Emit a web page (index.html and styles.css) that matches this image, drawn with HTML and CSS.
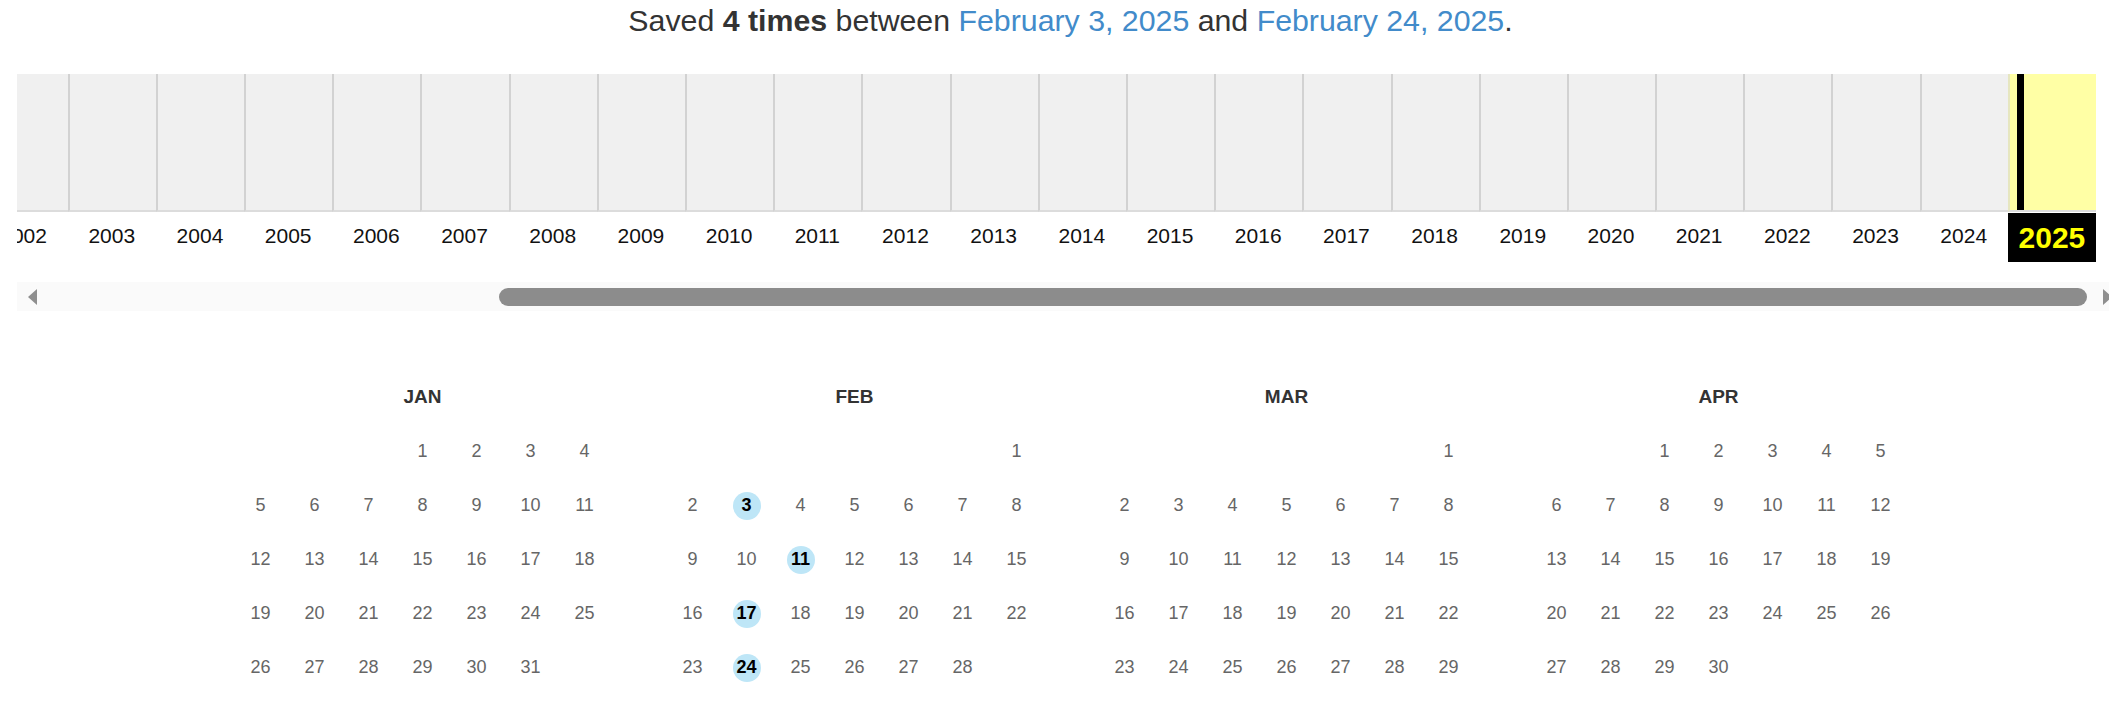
FILE: index.html
```html
<!DOCTYPE html>
<html lang="en">
<head>
  <meta charset="UTF-8">
  <title>Wayback Machine - Calendar</title>
  <link rel="stylesheet" href="styles.css">
</head>
<body>
  <div class="summary">
    Saved <strong>4 times</strong> between <a href="#">February 3, 2025</a> and <a href="#">February 24, 2025</a>.
  </div>

  <div class="sparkline">
    <div class="years">
      <div class="year"><div class="bars"></div><div class="label">2002</div></div>
      <div class="year"><div class="bars"></div><div class="label">2003</div></div>
      <div class="year"><div class="bars"></div><div class="label">2004</div></div>
      <div class="year"><div class="bars"></div><div class="label">2005</div></div>
      <div class="year"><div class="bars"></div><div class="label">2006</div></div>
      <div class="year"><div class="bars"></div><div class="label">2007</div></div>
      <div class="year"><div class="bars"></div><div class="label">2008</div></div>
      <div class="year"><div class="bars"></div><div class="label">2009</div></div>
      <div class="year"><div class="bars"></div><div class="label">2010</div></div>
      <div class="year"><div class="bars"></div><div class="label">2011</div></div>
      <div class="year"><div class="bars"></div><div class="label">2012</div></div>
      <div class="year"><div class="bars"></div><div class="label">2013</div></div>
      <div class="year"><div class="bars"></div><div class="label">2014</div></div>
      <div class="year"><div class="bars"></div><div class="label">2015</div></div>
      <div class="year"><div class="bars"></div><div class="label">2016</div></div>
      <div class="year"><div class="bars"></div><div class="label">2017</div></div>
      <div class="year"><div class="bars"></div><div class="label">2018</div></div>
      <div class="year"><div class="bars"></div><div class="label">2019</div></div>
      <div class="year"><div class="bars"></div><div class="label">2020</div></div>
      <div class="year"><div class="bars"></div><div class="label">2021</div></div>
      <div class="year"><div class="bars"></div><div class="label">2022</div></div>
      <div class="year"><div class="bars"></div><div class="label">2023</div></div>
      <div class="year"><div class="bars"></div><div class="label">2024</div></div>
      <div class="year current">
        <div class="bars"><span class="month-bar"></span></div>
        <div class="label">2025</div>
      </div>
    </div>
  </div>

  <div class="scroller">
    <span class="arrow left"></span>
    <span class="thumb"></span>
    <span class="arrow right"></span>
  </div>

  <div class="calendar">
    <div class="month">
      <div class="month-name">JAN</div>
      <span class="day start-4">1</span><span class="day">2</span><span class="day">3</span><span class="day">4</span>
      <span class="day">5</span><span class="day">6</span><span class="day">7</span><span class="day">8</span><span class="day">9</span><span class="day">10</span><span class="day">11</span>
      <span class="day">12</span><span class="day">13</span><span class="day">14</span><span class="day">15</span><span class="day">16</span><span class="day">17</span><span class="day">18</span>
      <span class="day">19</span><span class="day">20</span><span class="day">21</span><span class="day">22</span><span class="day">23</span><span class="day">24</span><span class="day">25</span>
      <span class="day">26</span><span class="day">27</span><span class="day">28</span><span class="day">29</span><span class="day">30</span><span class="day">31</span>
    </div>

    <div class="month">
      <div class="month-name">FEB</div>
      <span class="day start-7">1</span>
      <span class="day">2</span><span class="day"><a class="dot" href="#">3</a></span><span class="day">4</span><span class="day">5</span><span class="day">6</span><span class="day">7</span><span class="day">8</span>
      <span class="day">9</span><span class="day">10</span><span class="day"><a class="dot" href="#">11</a></span><span class="day">12</span><span class="day">13</span><span class="day">14</span><span class="day">15</span>
      <span class="day">16</span><span class="day"><a class="dot" href="#">17</a></span><span class="day">18</span><span class="day">19</span><span class="day">20</span><span class="day">21</span><span class="day">22</span>
      <span class="day">23</span><span class="day"><a class="dot" href="#">24</a></span><span class="day">25</span><span class="day">26</span><span class="day">27</span><span class="day">28</span>
    </div>

    <div class="month">
      <div class="month-name">MAR</div>
      <span class="day start-7">1</span>
      <span class="day">2</span><span class="day">3</span><span class="day">4</span><span class="day">5</span><span class="day">6</span><span class="day">7</span><span class="day">8</span>
      <span class="day">9</span><span class="day">10</span><span class="day">11</span><span class="day">12</span><span class="day">13</span><span class="day">14</span><span class="day">15</span>
      <span class="day">16</span><span class="day">17</span><span class="day">18</span><span class="day">19</span><span class="day">20</span><span class="day">21</span><span class="day">22</span>
      <span class="day">23</span><span class="day">24</span><span class="day">25</span><span class="day">26</span><span class="day">27</span><span class="day">28</span><span class="day">29</span>
    </div>

    <div class="month">
      <div class="month-name">APR</div>
      <span class="day start-3">1</span><span class="day">2</span><span class="day">3</span><span class="day">4</span><span class="day">5</span>
      <span class="day">6</span><span class="day">7</span><span class="day">8</span><span class="day">9</span><span class="day">10</span><span class="day">11</span><span class="day">12</span>
      <span class="day">13</span><span class="day">14</span><span class="day">15</span><span class="day">16</span><span class="day">17</span><span class="day">18</span><span class="day">19</span>
      <span class="day">20</span><span class="day">21</span><span class="day">22</span><span class="day">23</span><span class="day">24</span><span class="day">25</span><span class="day">26</span>
      <span class="day">27</span><span class="day">28</span><span class="day">29</span><span class="day">30</span>
    </div>
  </div>
</body>
</html>
```

FILE: styles.css
```css
html, body {
  overflow: hidden;
}

body {
  margin: 0;
  padding: 0;
  background: #fff;
  font-family: 'Liberation Sans', Arial, sans-serif;
  color: #333;
}

a {
  text-decoration: none;
}

.summary {
  padding-left: 32px;
  text-align: center;
  font-size: 30.3px;
  line-height: 41px;
  color: #333;
}

.summary a {
  color: #428bca;
}

/* year sparkline */
.sparkline {
  margin: 33px 0 0 17px;
  width: 2079px;
  overflow: hidden;
}

.years {
  display: flex;
  margin-left: -37.5px;
}

.year {
  flex: 0 0 88.2px;
  display: flex;
  flex-direction: column;
}

.bars {
  height: 138px;
  box-sizing: border-box;
  background: #f0f0f0;
  border-left: 2px solid #d2d2d2;
  border-bottom: 2px solid #dcdcdc;
}

.label {
  height: 51px;
  padding-bottom: 4px;
  box-sizing: border-box;
  display: flex;
  align-items: center;
  justify-content: center;
  font-size: 21px;
  color: #111;
}

.current .bars {
  background: #ffffa5;
  border-left-color: #e6e6c0;
  padding-left: 7px;
}

.month-bar {
  display: block;
  width: 7px;
  height: 100%;
  background: #000;
}

.current .label {
  background: #000;
  color: #ffff00;
  font-weight: bold;
  font-size: 30px;
  margin-top: 1px;
  height: 49px;
  padding-bottom: 0;
}

/* fake horizontal scrollbar */
.scroller {
  margin: 19px 0 0 17px;
  width: 2100px;
  height: 29px;
  background: #fafafa;
  display: flex;
  align-items: center;
}

.arrow {
  width: 0;
  height: 0;
  border-top: 8.5px solid transparent;
  border-bottom: 8.5px solid transparent;
}

.arrow.left {
  margin-left: 11px;
  border-right: 9px solid #8f8f8f;
}

.arrow.right {
  margin-left: 16px;
  border-left: 9px solid #8f8f8f;
}

.thumb {
  margin-left: 462px;
  width: 1588px;
  height: 18px;
  border-radius: 9px;
  background: #8c8c8c;
}

/* month grid */
.calendar {
  margin-top: 59px;
  padding-left: 32px;
  display: flex;
  justify-content: center;
  gap: 54px;
}

.month {
  display: grid;
  grid-template-columns: repeat(7, 54px);
  grid-auto-rows: 54px;
}

.month-name {
  grid-column: 1 / -1;
  display: flex;
  align-items: center;
  justify-content: center;
  font-size: 19px;
  font-weight: bold;
  color: #333;
}

.day {
  display: flex;
  align-items: center;
  justify-content: center;
  font-size: 18px;
  color: #666;
}

.start-3 { grid-column-start: 3; }
.start-4 { grid-column-start: 4; }
.start-7 { grid-column-start: 7; }

.dot {
  width: 28px;
  height: 28px;
  border-radius: 50%;
  background: #bee6f7;
  color: #000;
  font-weight: bold;
  display: flex;
  align-items: center;
  justify-content: center;
  margin-top: 1px;
}
```
